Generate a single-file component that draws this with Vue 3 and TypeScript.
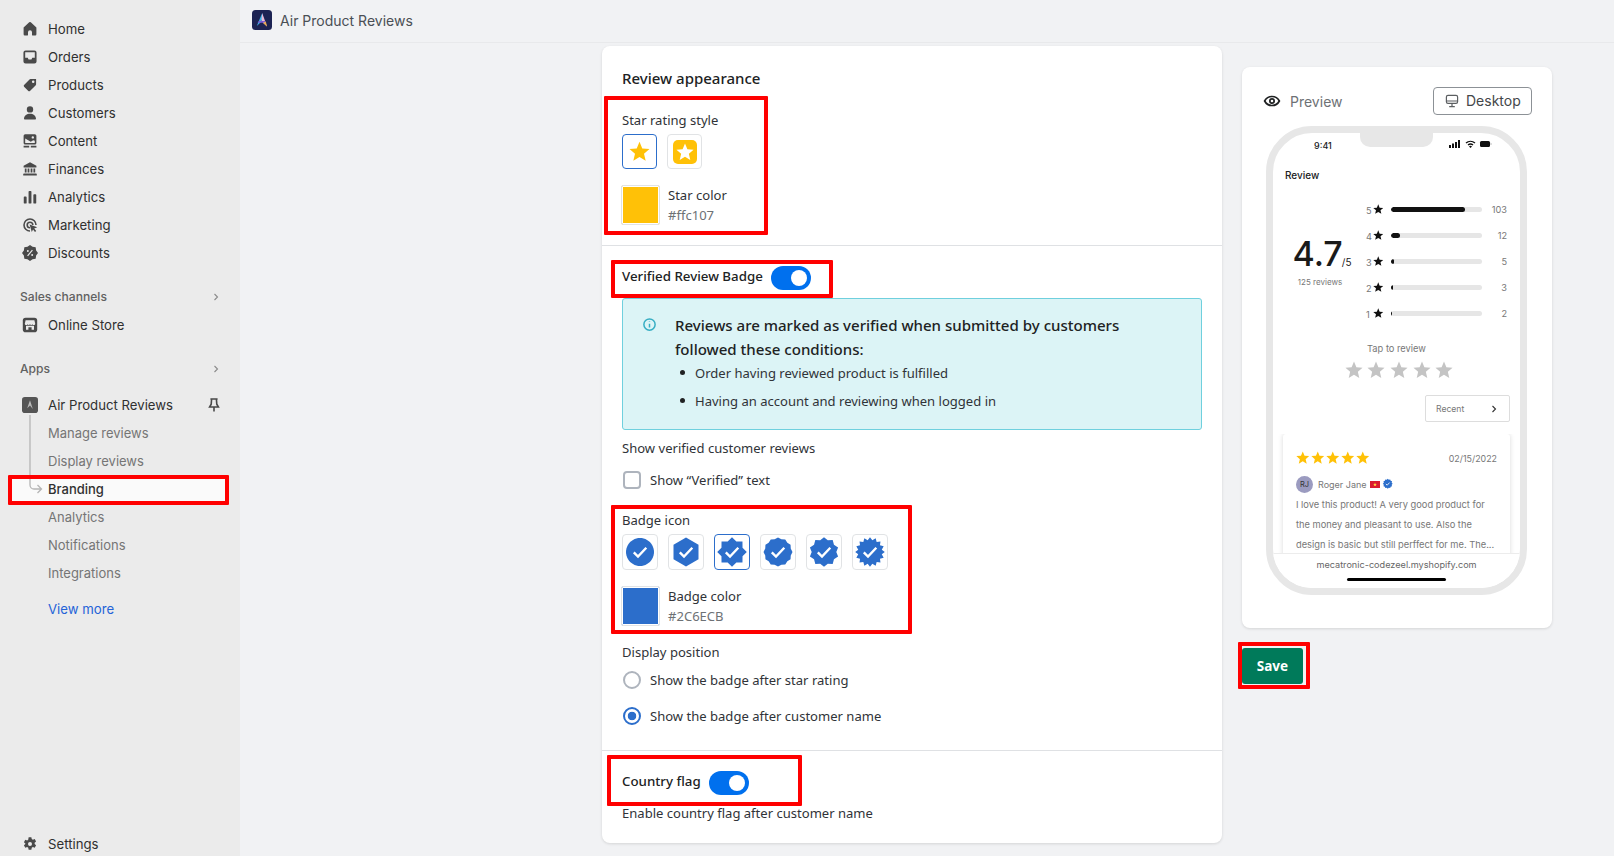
<script setup lang="ts">
function star(cx: number, cy: number, R: number, r: number, n: number): string {
  const pts: string[] = []
  for (let i = 0; i < n * 2; i++) {
    const a = (Math.PI * i) / n - Math.PI / 2
    const d = i % 2 === 0 ? R : r
    pts.push(`${(cx + d * Math.cos(a)).toFixed(2)},${(cy + d * Math.sin(a)).toFixed(2)}`)
  }
  return pts.join(' ')
}
const star5 = star(12, 12.8, 12, 5.4, 5)
const navIcons: { label: string; d: string }[] = [
  { label: 'Home', d: 'M18 8 11 1.7a1.5 1.5 0 0 0-2 0L2 8v8.5A1.5 1.5 0 0 0 3.5 18H7a.5.5 0 0 0 .5-.5V14a2.5 2.5 0 0 1 5 0v3.5a.5.5 0 0 0 .5.5h3.5a1.5 1.5 0 0 0 1.5-1.5z' },
  { label: 'Orders', d: 'M4.500 1.800h11a2.700 2.700 0 0 1 2.700 2.700v11a2.700 2.700 0 0 1-2.700 2.700h-11a2.700 2.700 0 0 1-2.700-2.700v-11a2.700 2.700 0 0 1 2.700-2.700zM4 4.200V11h3.200l1 2h3.600l1-2H16V4.200z' },
  { label: 'Products', d: 'M17.600 2.400h-6.800a1.500 1.500 0 0 0-1.100.4L2.600 10a1.500 1.500 0 0 0 0 2.100l5.300 5.300a1.500 1.500 0 0 0 2.100 0l7.200-7.100c.3-.3.4-.7.4-1.100zM14 7.600a1.600 1.600 0 1 1 0-3.200 1.600 1.600 0 0 1 0 3.200z' },
  { label: 'Customers', d: 'M10 1.500a4 4 0 1 1 0 8 4 4 0 0 1 0-8zM3.500 18a1 1 0 0 1-1-1.100C2.900 13.500 6 11 10 11s7.100 2.500 7.500 5.900a1 1 0 0 1-1 1.100z' },
  { label: 'Content', d: 'M4 1.500h12a2 2 0 0 1 2 2v9a2 2 0 0 1-2 2H4a2 2 0 0 1-2-2v-9a2 2 0 0 1 2-2zM13.500 4a1.500 1.500 0 1 0 0 3 1.500 1.500 0 0 0 0-3zM4 7v5.500h12V9.800l-2-.6-3 1.600zM2 16h7v2H2zm9 0h7v2h-7z' },
  { label: 'Finances', d: 'M10 1.500 2 6v2h16V6zM3.500 9.500h2.200v5H3.500zM7 9.500h2.200v5H7zm3.800 0H13v5h-2.200zm3.500 0h2.200v5h-2.200zM2.500 15.500h15a1 1 0 0 1 1 1V18h-17v-1.500a1 1 0 0 1 1-1z' },
  { label: 'Analytics', d: 'M3.200 9.500h1.600a1 1 0 0 1 1 1v7a.5.5 0 0 1-.5.500H2.700a.5.5 0 0 1-.5-.5v-7a1 1 0 0 1 1-1zm6-7h1.600a1 1 0 0 1 1 1v14a.5.500 0 0 1-.5.500H8.700a.5.500 0 0 1-.5-.5v-14a1 1 0 0 1 1-1zm6 4h1.600a1 1 0 0 1 1 1v10a.5.500 0 0 1-.5.500h-2.600a.5.500 0 0 1-.5-.5v-10a1 1 0 0 1 1-1z' },
  { label: 'Marketing', d: 'M10 1.500a8.500 8.500 0 0 1 8.500 8.500h-2A6.500 6.500 0 1 0 10 16.500v2a8.500 8.500 0 0 1 0-17zm0 4A4.500 4.500 0 0 1 14.500 10h-2A2.500 2.500 0 1 0 10 12.500v2a4.500 4.500 0 0 1 0-9zm-.500 3.800 9.500 3.500-3.700 1.600 2.500 3.200-1.600 1.200-2.400-3.200-1.600 3.300z' },
]
const rows = [
  { n: 5, pct: 82, v: 103 },
  { n: 4, pct: 10, v: 12 },
  { n: 3, pct: 4, v: 5 },
  { n: 2, pct: 3, v: 3 },
  { n: 1, pct: 2, v: 2 },
]
const badges = [
  star(14, 14, 14, 14, 24),
  'hex',
  star(14, 14, 14.800, 11.400, 8),
  star(14, 14, 14.500, 13.200, 12),
  star(14, 14, 14.800, 12.300, 10),
  star(14, 14, 14.800, 12, 16),
]
const hex = '14,-0.500 26.500,6.800 26.500,21.200 14,28.500 1.500,21.200 1.500,6.800'
</script>

<template>
  <div class="app">
    <aside class="side">
      <nav class="nav">
        <a v-for="i in navIcons" :key="i.label" class="row">
          <svg class="ico" viewBox="0 0 20 20"><path fill-rule="evenodd" :d="i.d" /></svg>
          <span>{{ i.label }}</span>
        </a>
        <a class="row">
          <svg class="ico disc" viewBox="0 0 20 20">
            <polygon :points="star(10, 10, 10, 8.300, 8)" />
            <path d="M7 13.500 13 6.500" stroke="#ebebeb" stroke-width="1.500" />
            <circle cx="7.300" cy="7.500" r="1.200" fill="#ebebeb" /><circle cx="12.700" cy="12.500" r="1.200" fill="#ebebeb" />
          </svg>
          <span>Discounts</span>
        </a>
        <div class="head first"><span>Sales channels</span><svg viewBox="0 0 20 20" class="chev"><path d="m7.500 5 5 5-5 5" /></svg></div>
        <a class="row">
          <svg class="ico store" viewBox="0 0 20 20">
            <rect x="1" y="1" width="18" height="18" rx="3.500" />
            <path d="M4.500 4h11l1 4.500a1.700 1.700 0 0 1-3.300.5 1.900 1.900 0 0 1-3.200 0 1.900 1.900 0 0 1-3.200 0 1.700 1.700 0 0 1-3.300-.5zM5 10.800h10V16h-3v-3.200H8V16H5z" fill="#ebebeb" />
          </svg>
          <span>Online Store</span>
        </a>
        <div class="head apps"><span>Apps</span><svg viewBox="0 0 20 20" class="chev"><path d="m7.500 5 5 5-5 5" /></svg></div>
        <a class="row app-row">
          <svg class="ico" viewBox="0 0 20 20">
            <rect x="0" y="0" width="20" height="20" rx="3.500" fill="#555" />
            <path d="M10 4 6.500 14 10 10.500 13.500 15z" fill="#bbb" />
          </svg>
          <span>Air Product Reviews</span>
          <svg class="pin" viewBox="0 0 20 20"><path d="M5.500 2.500h9M7 2.500 6.500 9 4.500 12.500h11L13.500 9 13 2.500M10 12.500V18" /></svg>
        </a>
        <div class="subs">
          <svg class="tree" viewBox="0 0 20 80"><path d="M5 0v70a4 4 0 0 0 4 4h7M12.500 70l4 4-4 4" /></svg>
          <a class="sub">Manage reviews</a>
          <a class="sub">Display reviews</a>
          <a class="sub on">Branding</a>
          <a class="sub">Analytics</a>
          <a class="sub">Notifications</a>
          <a class="sub">Integrations</a>
          <a class="more">View more</a>
        </div>
      </nav>
      <a class="row settings">
        <svg class="ico" viewBox="0 0 20 20">
          <path fill-rule="evenodd" d="M8.300 1.500h3.400l.5 2.400 1.400.8 2.300-.8 1.700 3-1.800 1.600v1.600l1.800 1.600-1.700 3-2.300-.8-1.400.8-.5 2.400H8.300l-.5-2.400-1.400-.8-2.300.8-1.700-3 1.800-1.600V9.300L2.400 7.700l1.700-3 2.300.8 1.400-.8zM10 7.500a2.500 2.500 0 1 0 0 5 2.500 2.500 0 0 0 0-5z" />
        </svg>
        <span>Settings</span>
      </a>
    </aside>

    <div class="main">
      <header class="top">
        <svg class="logo" viewBox="0 0 20 20">
          <rect width="20" height="20" rx="3.500" fill="#1c2353" />
          <path d="M10.200 3 4.800 16l4.700-4.500 1.200-5z" fill="#3fb4e8" />
          <path d="M10.200 3 15 16.500l-3.800-3.500-1.700-3z" fill="#e8b9d6" />
          <path d="M7 11h6.500l-1 1.700H5.500z" fill="#7a5bd6" />
          <path d="M11.200 13 15 16.500l-1.200-5z" fill="#e7a94f" />
        </svg>
        <span>Air Product Reviews</span>
      </header>
      <div class="content">
        <section class="card">
          <div class="sec s1">
            <h2>Review appearance</h2>
            <p class="lbl l-star">Star rating style</p>
            <div class="choices">
              <div class="choice sel"><svg viewBox="0 0 24 24" class="cs"><polygon :points="star5" fill="#ffc107" /></svg></div>
              <div class="choice">
                <svg viewBox="0 0 24 24" class="cs2"><rect width="24" height="24" rx="5" fill="#ffc107" /><g transform="translate(3 3) scale(.75)"><polygon :points="star5" fill="#fff" /></g></svg>
              </div>
            </div>
            <div class="color">
              <span class="swatch yellow"></span>
              <div><p class="lbl">Star color</p><p class="hex">#ffc107</p></div>
            </div>
          </div>
          <div class="sec s2">
            <div class="tg"><strong>Verified Review Badge</strong><span class="toggle"><i></i></span></div>
            <div class="alert">
              <svg class="info" viewBox="0 0 20 20"><circle cx="10" cy="10" r="7.500" /><path d="M10 9v5M10 6v.500" /></svg>
              <div>
                <p class="at">Reviews are marked as verified when submitted by customers followed these conditions:</p>
                <ul>
                  <li>Order having reviewed product is fulfilled</li>
                  <li>Having an account and reviewing when logged in</li>
                </ul>
              </div>
            </div>
            <p class="lbl l-ver">Show verified customer reviews</p>
            <div class="opt o-check"><span class="check"></span><span>Show “Verified” text</span></div>
            <p class="lbl l-badge">Badge icon</p>
            <div class="choices">
              <div v-for="(b, i) in badges" :key="i" class="choice wide" :class="{ sel: i === 2 }">
                <svg viewBox="0 0 28 28" class="bd">
                  <polygon :points="b === 'hex' ? hex : b" fill="#2c6ecb" />
                  <path d="m7.800 14.300 4.200 4.200 8.300-8.800" fill="none" stroke="#fff" stroke-width="2.400" />
                </svg>
              </div>
            </div>
            <div class="color">
              <span class="swatch blue"></span>
              <div><p class="lbl">Badge color</p><p class="hex">#2C6ECB</p></div>
            </div>
            <p class="lbl l-pos">Display position</p>
            <div class="opt o-r1"><span class="radio"></span><span>Show the badge after star rating</span></div>
            <div class="opt o-r2"><span class="radio on"></span><span>Show the badge after customer name</span></div>
          </div>
          <div class="sec s3">
            <div class="tg"><strong>Country flag</strong><span class="toggle"><i></i></span></div>
            <p class="lbl l-en">Enable country flag after customer name</p>
          </div>
        </section>

        <div class="right">
          <section class="pcard">
            <div class="phead">
              <svg class="eye" viewBox="0 0 20 20"><path d="M1.800 10C3.500 6.800 6.500 5 10 5s6.500 1.800 8.200 5c-1.700 3.200-4.700 5-8.200 5s-6.500-1.800-8.200-5z" /><circle cx="10" cy="10" r="2.400" /></svg>
              <span class="ptitle">Preview</span>
              <button class="desk">
                <svg viewBox="0 0 20 20"><rect x="3" y="3" width="14" height="10" rx="2" /><path d="M3 10h14M10 13v4M6.500 17h7" /></svg>
                Desktop
              </button>
            </div>
            <div class="phone">
              <div class="notch"><i></i></div>
              <div class="status">
                <span class="time">9:41</span>
                <svg class="stat" viewBox="0 0 44 10">
                  <rect x="0" y="6" width="2" height="3" /><rect x="3" y="4.500" width="2" height="4.500" /><rect x="6" y="3" width="2" height="6" /><rect x="9" y="1" width="2" height="8" />
                  <path d="M17 4a7 7 0 0 1 9 0M19 6a4 4 0 0 1 5 0" fill="none" stroke="#111" stroke-width="1.400" /><path d="m20 7.500 1.500 1.500 1.500-1.500a2 2 0 0 0-3 0z" />
                  <rect x="31" y="2" width="10" height="6" rx="1.500" /><rect x="41.500" y="4" width="1" height="2" fill="#bbb" />
                </svg>
              </div>
              <p class="rv">Review</p>
              <div class="stats">
                <div class="score">
                  <div class="big">4.7<small>/5</small></div>
                  <div class="cnt">125 reviews</div>
                </div>
                <div class="bars">
                  <div v-for="r in rows" :key="r.n" class="bar-row">
                    <span class="bn">{{ r.n }}</span>
                    <svg viewBox="0 0 24 24" class="bs"><polygon :points="star5" fill="#111" /></svg>
                    <span class="track"><span class="fill" :style="{ width: r.pct + '%' }"></span></span>
                    <span class="bv">{{ r.v }}</span>
                  </div>
                </div>
              </div>
              <p class="tap">Tap to review</p>
              <div class="gstars">
                <svg v-for="n in 5" :key="n" viewBox="0 0 24 24"><polygon :points="star5" fill="#c4c4c4" /></svg>
              </div>
              <div class="recent-wrap">
                <div class="recent"><span>Recent</span><svg viewBox="0 0 10 10"><path d="m3.500 2 3 3-3 3" /></svg></div>
              </div>
              <div class="list">
                <div class="rcard">
                  <div class="rtop">
                    <div class="ystars"><svg v-for="n in 5" :key="n" viewBox="0 0 24 24"><polygon :points="star5" fill="#ffc107" /></svg></div>
                    <span class="date">02/15/2022</span>
                  </div>
                  <div class="who">
                    <span class="av">RJ</span>
                    <span class="nm">Roger Jane</span>
                    <svg class="flag" viewBox="0 0 10 7"><rect width="10" height="7" fill="#da1a2d" /><polygon :points="star(5, 3.600, 2, .8, 5)" fill="#ffd83d" /></svg>
                    <svg class="vb" viewBox="0 0 28 28"><polygon :points="star(14, 14, 14.500, 12, 12)" fill="#2c6ecb" /><path d="m8.500 14.500 3.800 3.700 7.200-7.700" fill="none" stroke="#fff" stroke-width="2.500" /></svg>
                  </div>
                  <p class="txt">I love this product! A very good product for the money and pleasant to use. Also the design is basic but still perffect for me. The...</p>
                </div>
              </div>
              <div class="foot">
                <span>mecatronic-codezeel.myshopify.com</span>
                <i></i>
              </div>
            </div>
          </section>
          <button class="save">Save</button>
        </div>
      </div>
    </div>

    <div class="mark m1"></div>
    <div class="mark m2"></div>
    <div class="mark m3"></div>
    <div class="mark m4"></div>
    <div class="mark m5"></div>
    <div class="mark m6"></div>
  </div>
</template>

<style>
html, body { margin: 0; padding: 0; overflow: hidden; }
</style>

<style scoped>
* { box-sizing: border-box; }
p, h2, ul { margin: 0; padding: 0; }
.app { display: flex; height: 856px; width: 1614px; overflow: hidden; position: relative; background: #f1f2f4; font-family: "Noto Sans", sans-serif; color: #303030; font-size: 13.050px; }
.side { width: 240px; flex: none; background: #ebebeb; display: flex; flex-direction: column; justify-content: space-between; padding: 15px 0 0; font-family: Inter, sans-serif; font-size: 13.200px; color: #303030; }
.nav { display: flex; flex-direction: column; }
.row { height: 28px; display: flex; align-items: center; padding-left: 22px; gap: 10px; }
.ico { width: 16px; height: 16px; fill: #4a4a4a; flex: none; }
.head { height: 28px; margin-top: 15px; padding: 0 18px 0 20px; display: flex; align-items: center; justify-content: space-between; font-size: 12.100px; font-weight: 500; color: #616161; }
.head.first { margin-top: 15.500px; }
.head.apps { margin-top: 16px; }
.chev { width: 12px; height: 12px; fill: none; stroke: #8a8a8a; stroke-width: 1.800; }
.app-row { margin-top: 8px; position: relative; }
.pin { position: absolute; left: 206px; top: 6px; width: 16px; height: 16px; fill: none; stroke: #4a4a4a; stroke-width: 2; }
.subs { position: relative; display: flex; flex-direction: column; }
.tree { position: absolute; left: 25px; top: -4px; width: 20px; height: 80px; fill: none; stroke: #b5b5b5; stroke-width: 1.300; z-index: 1; }
.sub { height: 28px; line-height: 28px; padding-left: 48px; color: #757575; font-size: 13px; }
.sub.on { color: #303030; font-weight: 500; background: #fafafa; margin: 0 14px 0 8px; padding-left: 40px; }
.more { margin-top: 8px; height: 28px; line-height: 28px; padding-left: 48px; color: #2463d8; }
.settings { margin-bottom: -2px; }
.main { flex: 1; min-width: 0; display: flex; flex-direction: column; }
.top { height: 43px; flex: none; display: flex; align-items: center; gap: 8px; padding: 0 0 2px 12px; border-bottom: 1px solid #e8e9eb; font-family: Inter, sans-serif; font-size: 14px; color: #4a4f55; }
.logo { width: 20px; height: 20px; }
.content { display: flex; align-items: flex-start; padding: 3px 0 0 362px; gap: 20px; }
.card { width: 620px; flex: none; background: #fff; border-radius: 8px; box-shadow: 0 1px 3px rgba(0,0,0,.12); }
.sec { padding: 20px; }
.s1 { padding-top: 22px; border-bottom: 1px solid #dfe1e4; }
.s2 { padding-bottom: 24px; border-bottom: 1px solid #dfe1e4; }
h2 { font-size: 15px; font-weight: 500; line-height: 20px; color: #202223; }
.lbl { line-height: 20px; color: #303338; }
.l-star { margin-top: 22px; }
.choices { display: flex; gap: 10px; margin-top: 4px; }
.choice { width: 35px; height: 35px; border: 1px solid #e1e3e5; border-radius: 4px; display: flex; align-items: center; justify-content: center; }
.choice.wide { width: 36px; height: 36px; }
.choice.sel { border-color: #2c6ecb; }
.cs { width: 21px; height: 21px; }
.cs2 { width: 24px; height: 24px; }
.bd { width: 28px; height: 28px; overflow: visible; }
.color { display: flex; gap: 8px; margin: 16px 0 0 -1px; }
.swatch { width: 39px; height: 40px; border: 1px solid #e1e3e5; border-radius: 2px; box-shadow: inset 0 0 0 1px #fff; }
.yellow { background: #ffc107; }
.blue { background: #2c6ecb; }
.hex { line-height: 20px; color: #6d7175; }
.tg { display: flex; align-items: center; gap: 8px; height: 24px; }
.tg strong { font-weight: 500; font-size: 13.300px; color: #202223; margin-bottom: 4px; }
.toggle { width: 40px; height: 24px; border-radius: 12px; background: #0070ee; display: flex; align-items: center; justify-content: flex-end; padding-right: 4px; }
.toggle i { width: 16px; height: 16px; border-radius: 50%; background: #fff; display: block; }
.alert { margin-top: 8px; height: 132px; background: #dcf4f6; border: 1px solid #6fd0de; border-radius: 3px; display: flex; gap: 18px; padding: 14px 20px 0 19px; }
.info { width: 15px; height: 15px; flex: none; margin-top: 4px; fill: none; stroke: #37aec3; stroke-width: 2; }
.at { font-size: 15.050px; font-weight: 500; line-height: 24px; color: #202223; width: 460px; }
ul { list-style: none; margin-top: 2px; }
li { line-height: 20px; padding-left: 20px; position: relative; color: #303338; }
li + li { margin-top: 8px; }
li::before { content: ""; position: absolute; left: 5px; top: 7px; width: 5px; height: 5px; border-radius: 50%; background: #202223; }
.l-ver { margin-top: 8px; }
.opt { display: flex; align-items: center; gap: 9px; height: 20px; color: #303338; }
.o-check { margin-top: 12px; padding-left: 1px; }
.check { width: 18px; height: 18px; border: 2px solid #aeb4bd; border-radius: 4px; }
.l-badge { margin-top: 20px; }
.l-pos { margin-top: 16px; }
.o-r1 { margin-top: 8px; padding-left: 1px; }
.o-r2 { margin-top: 16px; padding-left: 1px; }
.radio { width: 18px; height: 18px; border: 2px solid #aeb4bd; border-radius: 50%; }
.radio.on { border-color: #2c6ecb; background: radial-gradient(circle, #2c6ecb 0 4px, #fff 4.600px); }
.l-en { margin-top: 8px; }
.right { width: 310px; flex: none; margin-top: 21px; }
.pcard { background: #fff; border-radius: 8px; box-shadow: 0 1px 3px rgba(0,0,0,.12); padding: 20px 20px 33px 21px; height: 561px; font-family: Inter, sans-serif; }
.phead { display: flex; align-items: center; height: 28px; }
.eye { width: 18px; height: 18px; fill: none; stroke: #202223; stroke-width: 1.900; }
.ptitle { margin-left: 9px; color: #6d7175; flex: 1; font-size: 14px; }
.desk { width: 99px; height: 28px; border: 1px solid #8c9196; border-radius: 4px; background: #fff; display: flex; align-items: center; padding: 0 0 1px 10px; gap: 6px; font: 14px Inter, sans-serif; color: #44474a; }
.desk svg { width: 16px; height: 16px; fill: none; stroke: #5c5f62; stroke-width: 1.500; }
.phone { position: relative; margin: 11px 0 0 3px; width: 261px; height: 469px; border: 7px solid #e7e7e7; border-radius: 46px; overflow: hidden; display: flex; flex-direction: column; background: #fff; color: #202223; }
.notch { position: absolute; top: -1px; left: 87px; width: 73px; height: 15px; background: #e7e7e7; border-radius: 0 0 10px 10px; z-index: 2; }
.notch i { position: absolute; left: 17px; top: -3px; width: 39px; height: 3px; background: #dcdcdc; }
.status { height: 24px; flex: none; position: relative; display: flex; align-items: flex-end; justify-content: space-between; padding: 0 27px 5px 41px; }
.time { font-size: 9px; font-weight: 500; line-height: 12px; }
.stat { width: 44px; height: 10px; fill: #111; position: relative; top: -3px; }
.rv { margin: 11px 0 0 12px; font-size: 10px; font-weight: 500; line-height: 14px; }
.stats { margin-top: 14px; display: flex; height: 130px; }
.score { width: 88px; flex: none; display: flex; flex-direction: column; align-items: center; justify-content: center; padding: 0 0 0 6px; }
.big { font-size: 34px; font-weight: 500; line-height: 40px; color: #1a1a1a; margin-left: 4px; }
.big small { font-size: 10px; font-weight: 400; margin-left: -1px; }
.cnt { font-size: 8px; line-height: 12px; color: #777; margin-top: -6px; }
.bars { flex: 1; display: flex; flex-direction: column; padding-right: 13px; }
.bar-row { height: 26px; display: flex; align-items: center; font-size: 9.200px; color: #777; margin-left: 5px; }
.bn { width: 6px; padding-top: 2px; }
.bs { width: 10.500px; height: 10.500px; margin-left: 1px; flex: none; }
.track { width: 91px; height: 5px; border-radius: 3px; background: #e6e6e6; margin-left: 7px; overflow: hidden; }
.fill { display: block; height: 100%; border-radius: 3px; background: #111; }
.bv { flex: 1; text-align: right; }
.tap { margin-top: 17px; text-align: center; font-size: 9.300px; line-height: 12px; color: #777; }
.gstars { margin: 6px 0 0 5px; display: flex; justify-content: center; gap: 4.600px; height: 18px; }
.gstars svg { width: 18px; height: 18px; }
.recent-wrap { margin-top: 16px; display: flex; justify-content: flex-end; padding-right: 10px; }
.recent { width: 85px; height: 27px; border: 1px solid #ddd; border-radius: 2px; display: flex; align-items: center; justify-content: space-between; padding: 0 10px; font-size: 8.600px; color: #777; }
.recent svg { width: 10px; height: 10px; fill: none; stroke: #333; stroke-width: 1.100; }
.list { flex: 1; min-height: 0; overflow: hidden; margin-top: 12px; padding: 0 10px; }
.rcard { border-radius: 3px; box-shadow: 0 0 5px rgba(0,0,0,.15); padding: 16px 13px; height: 160px; }
.rtop { display: flex; justify-content: space-between; align-items: center; height: 16px; }
.ystars { display: flex; gap: 1.500px; }
.ystars svg { width: 13.500px; height: 13.500px; }
.date { font-size: 8.900px; color: #777; }
.who { display: flex; align-items: center; margin-top: 9px; height: 18px; }
.av { width: 17px; height: 17px; border-radius: 50%; background: #9b9bc0; font-size: 7.500px; color: #333; display: flex; align-items: center; justify-content: center; }
.nm { font-size: 9px; color: #777; margin-left: 5px; }
.flag { width: 10px; height: 7px; margin-left: 3px; }
.vb { width: 9.500px; height: 9.500px; margin-left: 3.500px; overflow: visible; }
.txt { font-size: 9.300px; line-height: 20px; color: #777; margin-top: 2px; }
.foot { height: 35px; flex: none; background: #fff; display: flex; flex-direction: column; align-items: center; border-top: 1px solid #ececec; font-size: 9.150px; color: #666; padding-top: 5px; position: relative; z-index: 1; }
.foot span { line-height: 12px; }
.foot i { display: block; width: 99px; height: 3px; background: #000; border-radius: 2px; margin-top: 7px; }
.save { display: block; margin-top: 20px; width: 61px; height: 36px; border: 0; border-radius: 3px; background: #007a5a; color: #fff; font: 700 13.500px "Noto Sans", sans-serif; padding: 0; }
.mark { position: absolute; border: 4px solid #f00; border-radius: 1px; pointer-events: none; z-index: 5; }
.m1 { left: 604px; top: 96px; width: 164px; height: 139px; }
.m2 { left: 611px; top: 260px; width: 222px; height: 38px; }
.m3 { left: 8px; top: 475px; width: 221px; height: 30px; }
.m4 { left: 611px; top: 505px; width: 301px; height: 129px; }
.m5 { left: 607px; top: 755px; width: 195px; height: 51px; }
.m6 { left: 1238px; top: 642px; width: 72px; height: 47px; }
</style>
